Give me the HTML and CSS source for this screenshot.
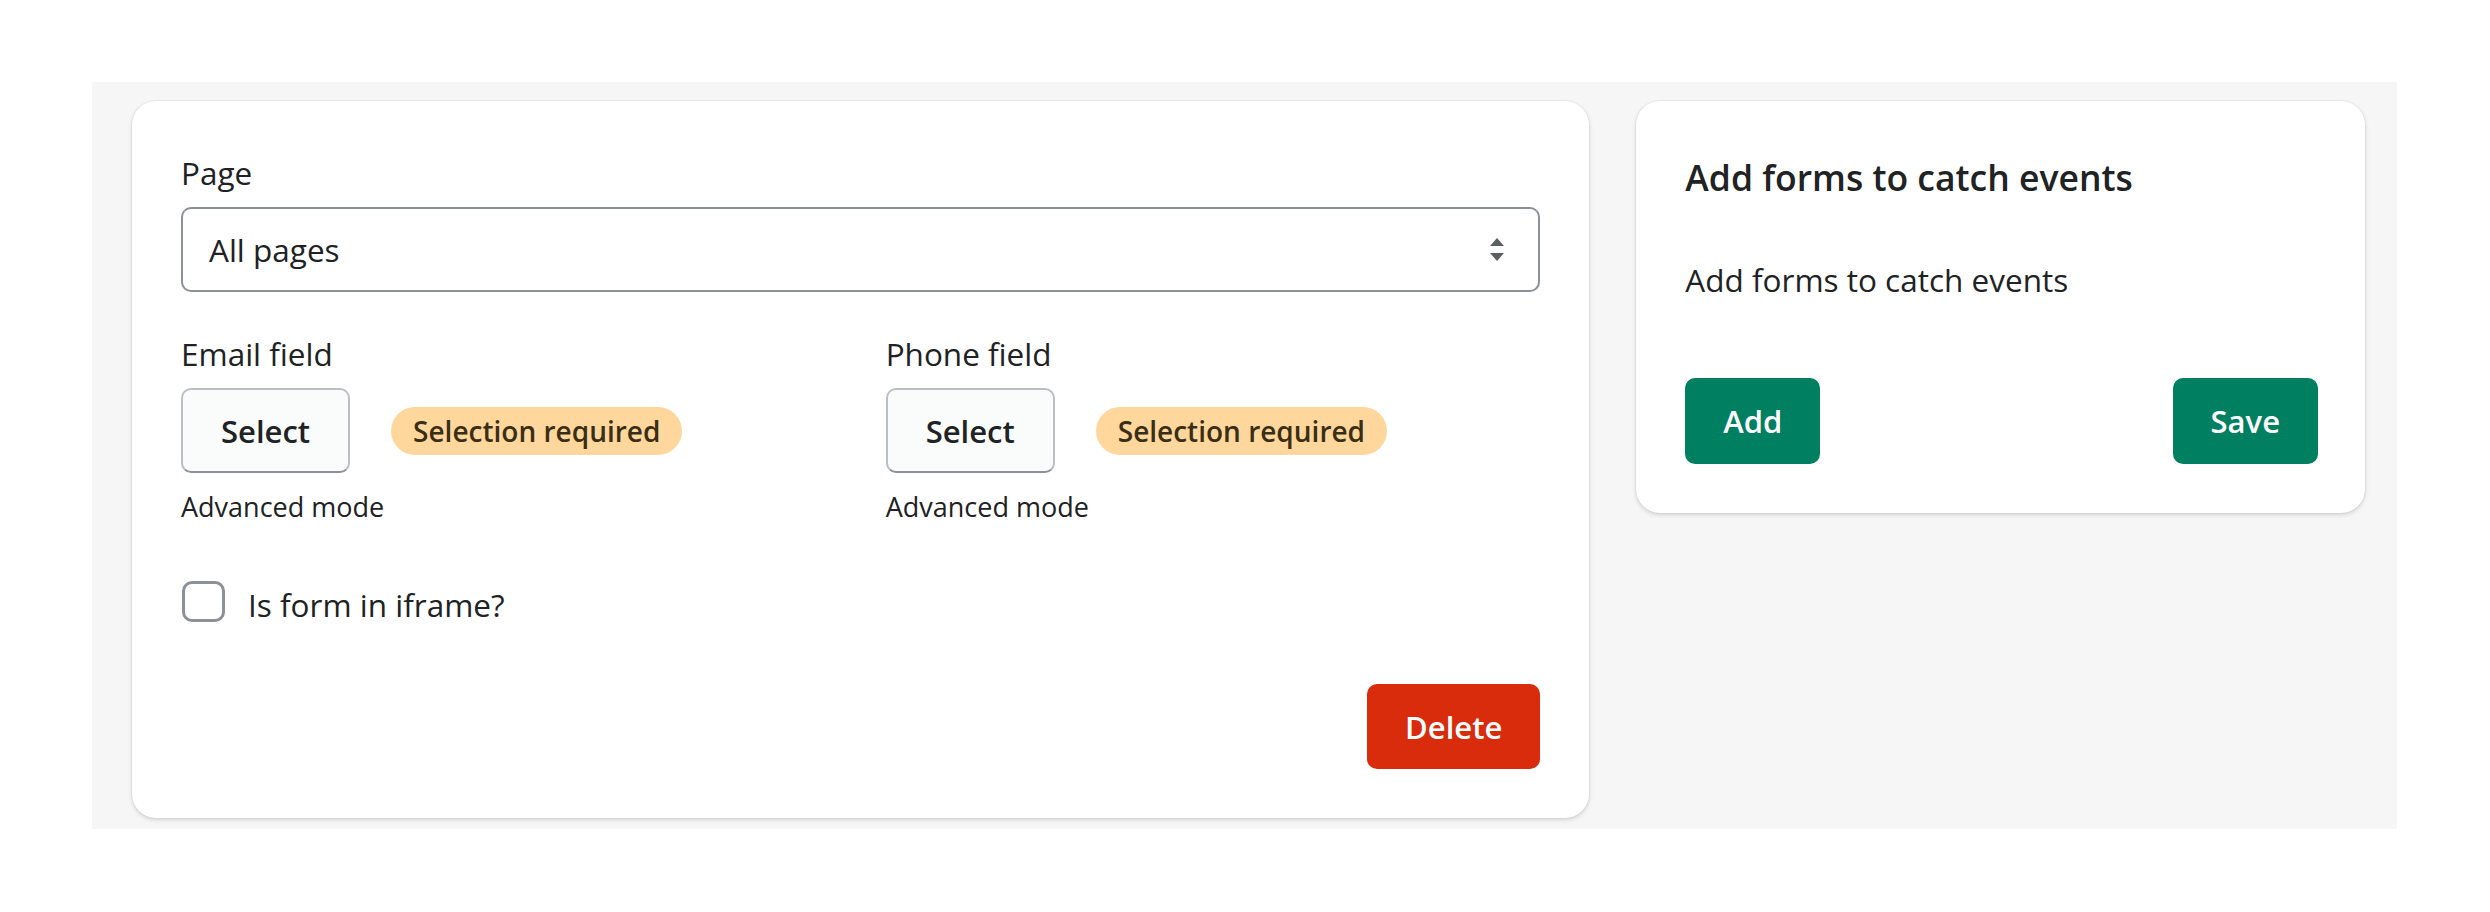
FILE: index.html
```html
<!DOCTYPE html>
<html lang="en">
<head>
<meta charset="utf-8">
<title>Forms</title>
<link rel="stylesheet" href="styles.css">
</head>
<body>
<div class="page">
  <div class="card card-main">
    <div class="label">Page</div>
    <div class="select">
      <span class="select-value">All pages</span>
      <svg class="select-arrows" width="14" height="23" viewBox="0 0 14 23" aria-hidden="true">
        <polygon points="7,0 14,8 0,8" fill="#5c5f62"/>
        <polygon points="0,15 14,15 7,23" fill="#5c5f62"/>
      </svg>
    </div>
    <div class="fields">
      <div class="field">
        <div class="label">Email field</div>
        <div class="field-row">
          <button class="btn btn-plain">Select</button>
          <span class="badge">Selection required</span>
        </div>
        <div class="caption">Advanced mode</div>
      </div>
      <div class="field">
        <div class="label">Phone field</div>
        <div class="field-row">
          <button class="btn btn-plain">Select</button>
          <span class="badge">Selection required</span>
        </div>
        <div class="caption">Advanced mode</div>
      </div>
    </div>
    <label class="check-row">
      <span class="checkbox"></span>
      <span class="check-text">Is form in iframe?</span>
    </label>
    <div class="footer">
      <button class="btn btn-danger">Delete</button>
    </div>
  </div>
  <div class="card card-side">
    <h2 class="heading">Add forms to catch events</h2>
    <p class="text">Add forms to catch events</p>
    <div class="actions">
      <button class="btn btn-primary">Add</button>
      <button class="btn btn-primary">Save</button>
    </div>
  </div>
</div>
</body>
</html>
```

FILE: styles.css
```css
html, body {
  margin: 0;
  padding: 0;
  background: #ffffff;
}

body {
  font-family: "Open Sans", "Noto Sans", sans-serif;
  font-size: 31.5px;
  line-height: 48px;
  color: #202223;
}

.page {
  box-sizing: border-box;
  margin: 82px 0 0 92px;
  width: 2305px;
  height: 747px;
  background: #f6f6f7;
  padding: 19px 32px 0 40px;
  display: grid;
  grid-template-columns: 2fr 1fr;
  align-items: start;
  column-gap: 47px;
}

.card {
  box-sizing: border-box;
  background: #ffffff;
  border-radius: 24px;
  box-shadow: 0 0 0 1px rgba(63, 63, 68, 0.05), 0 2px 4px rgba(63, 63, 68, 0.18);
}

.card-main {
  padding: 48px 49px 49px;
}

.card-side {
  padding: 48px 47px 49px 49px;
}

.label {
  height: 48px;
  margin-bottom: 10px;
}

.select {
  box-sizing: border-box;
  height: 85px;
  border: 2px solid #8c9196;
  border-top-color: #898f94;
  border-radius: 10px;
  padding: 0 34px 0 26px;
  display: flex;
  align-items: center;
  justify-content: space-between;
}

.select-value {
  line-height: 48px;
}

.select-arrows {
  display: block;
}

.fields {
  margin-top: 38px;
  display: grid;
  grid-template-columns: 1fr 1fr;
  column-gap: 50px;
}

.field-row {
  display: flex;
  align-items: center;
}

.btn {
  box-sizing: border-box;
  font-family: inherit;
  font-weight: 600;
  font-size: 31px;
  line-height: 48px;
  height: 85px;
  border-radius: 10px;
  padding: 0 38px;
  border: 0;
  cursor: pointer;
}

.btn-plain {
  background: #fafbfb;
  color: #202223;
  border: 2px solid #babfc3;
  border-bottom-color: #8c9196;
  padding: 0 38px;
}

.badge {
  margin-left: 41px;
  height: 48px;
  line-height: 48px;
  padding: 0 22px;
  border-radius: 24px;
  background: #ffd79d;
  color: #3a2e14;
  font-size: 28px;
  font-weight: 600;
}

.caption {
  margin-top: 15px;
  font-size: 27px;
  line-height: 38px;
  color: #202223;
}

.check-row {
  margin-top: 55px;
  display: flex;
  align-items: flex-start;
  height: 48px;
}

.checkbox {
  box-sizing: border-box;
  width: 43px;
  height: 41px;
  margin-left: 1px;
  border: 3px solid #8c9196;
  border-radius: 10px;
  background: #ffffff;
}

.check-text {
  margin-left: 23px;
}

.footer {
  margin-top: 55px;
  display: flex;
  justify-content: flex-end;
}

.btn-danger {
  background: #d82c0d;
  color: #ffffff;
}

.heading {
  margin: 0;
  font-size: 35.5px;
  font-weight: 600;
  line-height: 57.6px;
}

.text {
  margin: 49.5px 0 0;
}

.actions {
  margin-top: 74px;
  display: flex;
  justify-content: space-between;
}

.btn-primary {
  background: #008060;
  color: #ffffff;
  height: 86px;
}
```
